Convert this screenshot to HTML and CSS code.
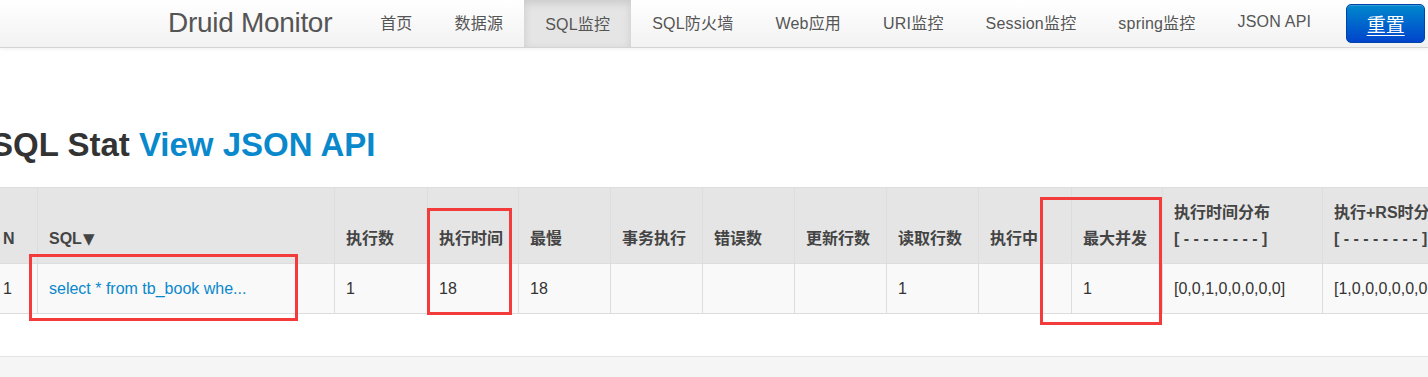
FILE: index.html
```html
<!DOCTYPE html>
<html lang="zh-CN">
<head>
<meta charset="utf-8">
<title>Druid Monitor</title>
<link rel="stylesheet" href="styles.css">
</head>
<body>
<header class="navbar">
  <span class="brand">Druid Monitor</span>
  <nav class="nav">
    <a class="nav-item" href="#">首页</a>
    <a class="nav-item" href="#">数据源</a>
    <a class="nav-item active" href="#">SQL监控</a>
    <a class="nav-item" href="#">SQL防火墙</a>
    <a class="nav-item" href="#">Web应用</a>
    <a class="nav-item" href="#">URI监控</a>
    <a class="nav-item" href="#">Session监控</a>
    <a class="nav-item" href="#">spring监控</a>
    <a class="nav-item" href="#">JSON API</a>
  </nav>
  <a class="btn-reset" href="#">重置</a>
</header>

<main class="content">
  <h1 class="title">SQL Stat <a class="title-link" href="#">View JSON API</a></h1>
  <table class="stat">
    <thead>
      <tr>
        <th class="c-sn">N</th>
        <th class="c-sql">SQL<span class="sort">▼</span></th>
        <th class="c-93">执行数</th>
        <th class="c-91">执行时间</th>
        <th class="c-92">最慢</th>
        <th class="c-92">事务执行</th>
        <th class="c-92">错误数</th>
        <th class="c-92">更新行数</th>
        <th class="c-92">读取行数</th>
        <th class="c-93">执行中</th>
        <th class="c-91">最大并发</th>
        <th class="c-dist">执行时间分布<br>[ - - - - - - - - ]</th>
        <th class="c-dist">执行+RS时分布<br>[ - - - - - - - - ]</th>
        <th class="c-dist">读写时间分布<br>[ - - - - - - - - ]</th>
      </tr>
    </thead>
    <tbody>
      <tr>
        <td>1</td>
        <td><a class="sql-link" href="#">select * from tb_book whe...</a></td>
        <td>1</td>
        <td>18</td>
        <td>18</td>
        <td></td>
        <td></td>
        <td></td>
        <td>1</td>
        <td></td>
        <td>1</td>
        <td>[0,0,1,0,0,0,0,0]</td>
        <td>[1,0,0,0,0,0,0,0]</td>
        <td>[0,0,0,0,0,0]</td>
      </tr>
    </tbody>
  </table>
</main>

<footer class="footer"></footer>

<div class="mark mark-sql"></div>
<div class="mark mark-time"></div>
<div class="mark mark-conc"></div>
</body>
</html>
```

FILE: styles.css
```css
html, body {
  margin: 0;
  padding: 0;
}
body {
  font-family: "Liberation Sans", "Noto Sans CJK SC", sans-serif;
  color: #333;
  background: #fff;
  overflow: hidden;
  width: 1428px;
  height: 377px;
  position: relative;
}
a { text-decoration: none; }

/* navbar */
.navbar {
  display: flex;
  align-items: center;
  height: 47px;
  border-bottom: 1px solid #d4d4d4;
  background: linear-gradient(#ffffff, #f2f2f2);
  box-shadow: 0 1px 4px rgba(0,0,0,0.065);
  padding-left: 168px;
  white-space: nowrap;
}
.brand {
  font-size: 28px;
  letter-spacing: -0.3px;
  color: #555;
  line-height: 47px;
  margin-top: -2px;
  margin-right: 27px;
}
.nav {
  display: flex;
  height: 47px;
}
.nav-item {
  display: flex;
  align-items: center;
  padding: 0 21px;
  font-size: 16px;
  letter-spacing: 0.2px;
  color: #555;
  height: 47px;
  margin-top: -2px;
}
.nav-item.active {
  background: #e5e5e5;
  box-shadow: inset 0 3px 8px rgba(0,0,0,0.125);
  margin-top: 0;
  padding-bottom: 2px;
  height: 47px;
  box-sizing: border-box;
}
.btn-reset {
  margin-left: 14px;
  width: 79px;
  height: 39px;
  box-sizing: border-box;
  display: flex;
  align-items: center;
  justify-content: center;
  color: #fff;
  font-size: 19px;
  text-decoration: underline;
  text-underline-offset: 3px;
  border-radius: 5px;
  background: linear-gradient(#0088cc, #0044cc);
  border: 1px solid #0044aa;
  box-shadow: inset 0 1px 0 rgba(255,255,255,0.2);
  flex-shrink: 0;
}

/* content */
.content {
  margin-left: -9px;
}
.title {
  margin: 77px 0 22px;
  font-size: 33px;
  line-height: 40px;
  font-weight: bold;
  color: #333;
  white-space: nowrap;
}
.title-link { color: #0a88cc; }

.stat {
  table-layout: fixed;
  border-spacing: 0;
  width: 1651px;
  border-top: 1px solid #ddd;
  font-size: 16px;
  line-height: 26px;
}
.stat th, .stat td {
  box-sizing: border-box;
  border-left: 1px solid #ddd;
  border-bottom: 1px solid #ddd;
  text-align: left;
  white-space: nowrap;
  overflow: hidden;
}
.stat th {
  background: #e5e5e5;
  color: #444;
  font-weight: bold;
  vertical-align: bottom;
  padding: 12px 11px 11px;
}
.stat td {
  background: #f9f9f9;
  padding: 12px 11px 11px;
  vertical-align: middle;
  height: 50px;
}
.sort {
  font-family: "DejaVu Sans", sans-serif;
  font-size: 15px;
  margin-left: 1px;
}
.c-sn { width: 46px; }
.c-sql { width: 297px; }
.c-93 { width: 93px; }
.c-91 { width: 91px; }
.c-92 { width: 92px; }
.c-dist { width: 160px; }
.sql-link { color: #0a88cc; }

.footer {
  margin-top: 42px;
  border-top: 1px solid #e3e3e3;
  background: #f5f5f5;
  height: 40px;
}

/* annotation boxes */
.mark {
  position: absolute;
  border: 3px solid #f33b3b;
  box-sizing: border-box;
}
.mark-sql { left: 29px; top: 254px; width: 269px; height: 67px; }
.mark-time { left: 427px; top: 208px; width: 85px; height: 107px; }
.mark-conc { left: 1040px; top: 197px; width: 122px; height: 128px; }
```
